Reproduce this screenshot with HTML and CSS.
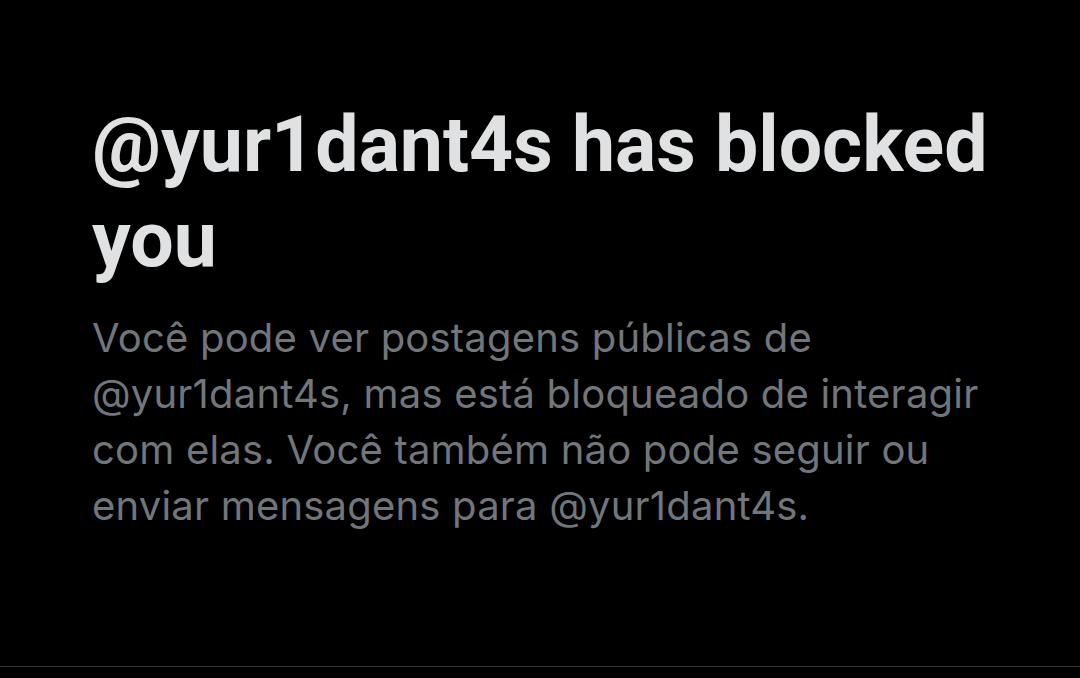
FILE: index.html
```html
<!DOCTYPE html>
<html lang="pt">
<head>
    <meta charset="UTF-8">
    <meta name="viewport" content="width=device-width, initial-scale=1.0">
    <title>Bloqueado</title>
    <link rel="stylesheet" href="styles.css">
</head>
<body>

    <div class="page">
        <div class="blocked-box">
            <h1 class="blocked-title">@yur1dant4s has blocked you</h1>
            <p class="blocked-text">Você pode ver postagens públicas de @yur1dant4s, mas está bloqueado de interagir com elas. Você também não pode seguir ou enviar mensagens para @yur1dant4s.</p>
        </div>
        <div class="bottom-line"></div>
    </div>

</body>
</html>
```

FILE: styles.css
```css
body {
    margin: 0;
    background-color: #000000;
    font-family: Roboto, "Liberation Sans", Arial, sans-serif;
}
.page {
    height: 678px;
    display: flex;
    flex-direction: column;
    overflow: hidden;
}
.blocked-box {
    flex: 1;
    padding: 98px 60px 0 92px;
}
.blocked-title {
    margin: 0;
    font-size: 77px;
    line-height: 95px;
    font-weight: 700;
    color: #e0e1e2;
    max-width: 920px;
}
.blocked-text {
    margin: 22px 0 0;
    font-family: Inter, "Noto Sans", sans-serif;
    font-size: 40px;
    line-height: 56px;
    letter-spacing: 0.2px;
    color: #71767b;
    max-width: 900px;
}
.bottom-line {
    height: 1px;
    background-color: #2f3336;
    margin-bottom: 11px;
}
```
